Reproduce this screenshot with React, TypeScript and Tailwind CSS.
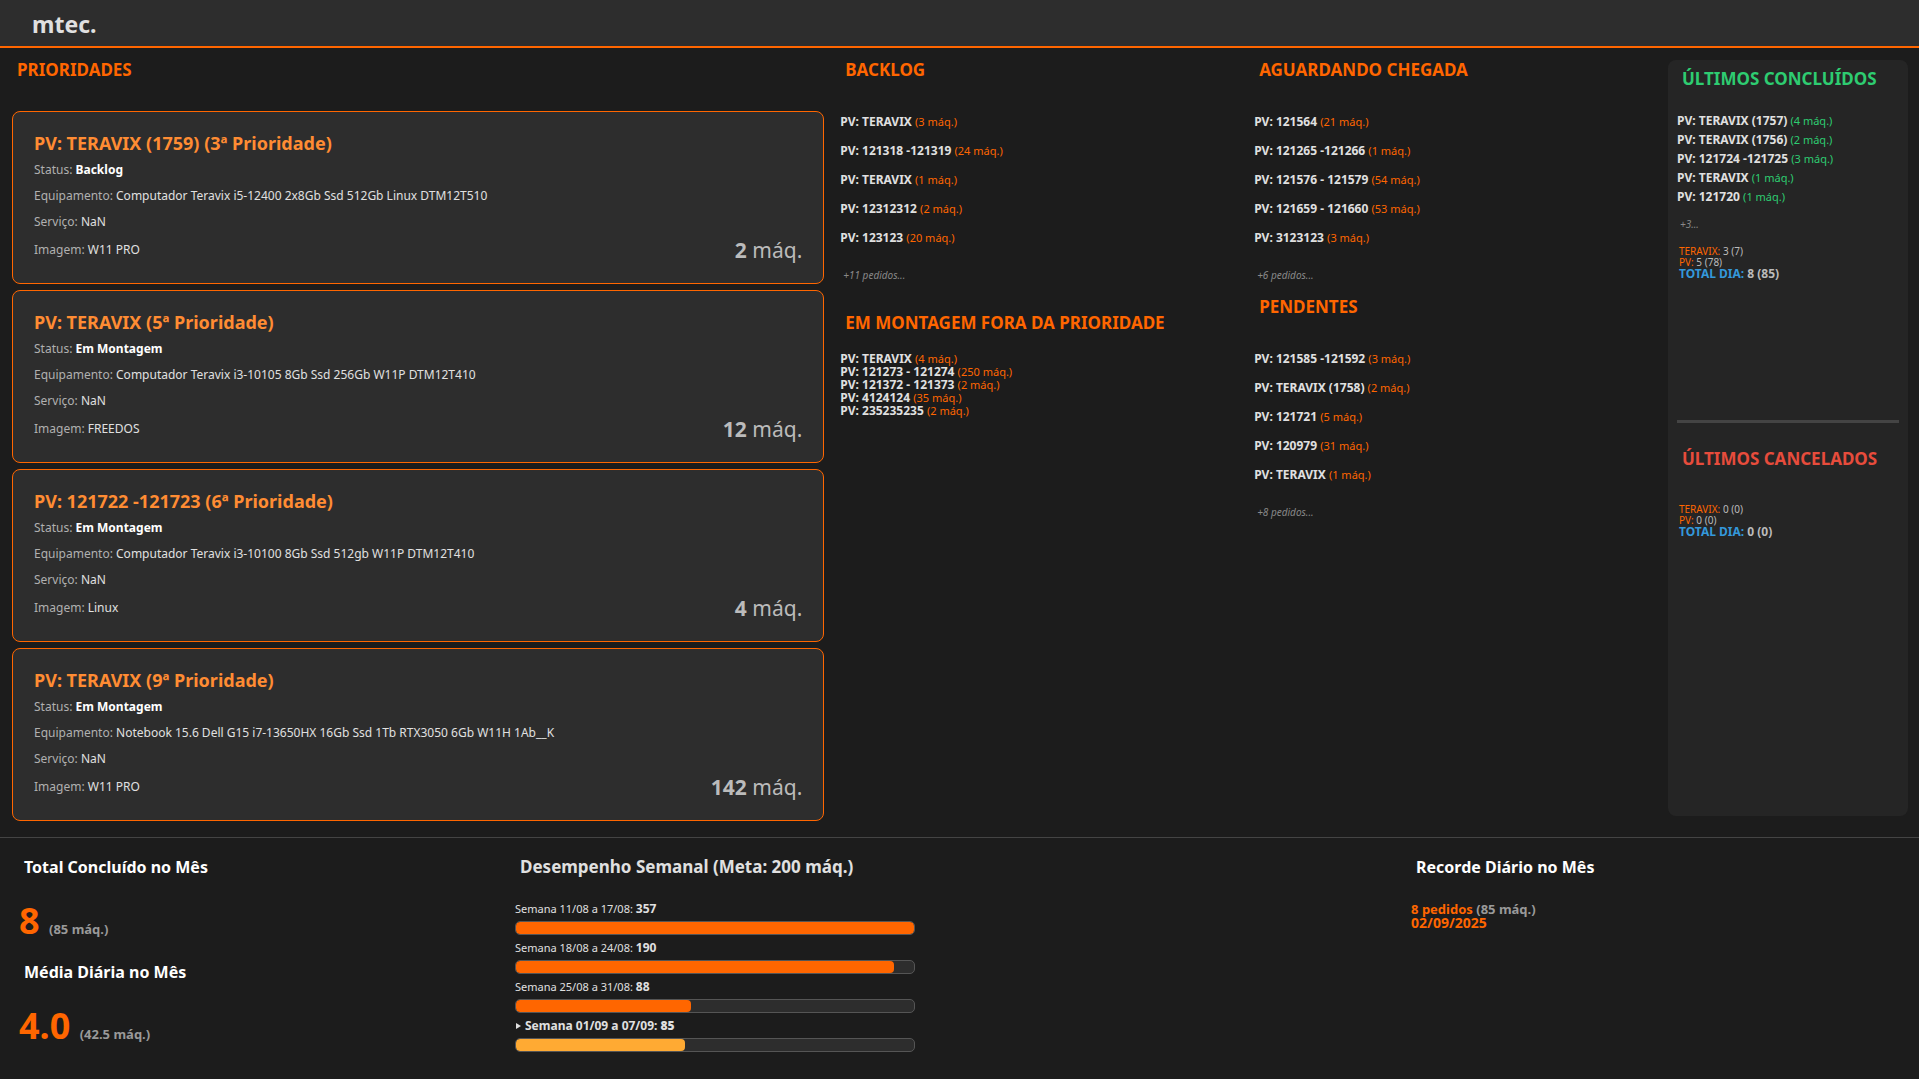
import type { ReactNode } from "react";
import clsx from "clsx";

type Order = { name: string; qty: number };

const priorities = [
  { title: "PV: TERAVIX (1759) (3ª Prioridade)", status: "Backlog", equipment: "Computador Teravix i5-12400 2x8Gb Ssd 512Gb Linux DTM12T510", image: "W11 PRO", qty: 2 },
  { title: "PV: TERAVIX (5ª Prioridade)", status: "Em Montagem", equipment: "Computador Teravix i3-10105 8Gb Ssd 256Gb W11P DTM12T410", image: "FREEDOS", qty: 12 },
  { title: "PV: 121722 -121723 (6ª Prioridade)", status: "Em Montagem", equipment: "Computador Teravix i3-10100 8Gb Ssd 512gb W11P DTM12T410", image: "Linux", qty: 4 },
  { title: "PV: TERAVIX (9ª Prioridade)", status: "Em Montagem", equipment: "Notebook 15.6 Dell G15 i7-13650HX 16Gb Ssd 1Tb RTX3050 6Gb W11H 1Ab__K", image: "W11 PRO", qty: 142 },
];

const backlog: Order[] = [
  { name: "TERAVIX", qty: 3 },
  { name: "121318 -121319", qty: 24 },
  { name: "TERAVIX", qty: 1 },
  { name: "12312312", qty: 2 },
  { name: "123123", qty: 20 },
];

const assembling: Order[] = [
  { name: "TERAVIX", qty: 4 },
  { name: "121273 - 121274", qty: 250 },
  { name: "121372 - 121373", qty: 2 },
  { name: "4124124", qty: 35 },
  { name: "235235235", qty: 2 },
];

const awaiting: Order[] = [
  { name: "121564", qty: 21 },
  { name: "121265 -121266", qty: 1 },
  { name: "121576 - 121579", qty: 54 },
  { name: "121659 - 121660", qty: 53 },
  { name: "3123123", qty: 3 },
];

const pending: Order[] = [
  { name: "121585 -121592", qty: 3 },
  { name: "TERAVIX (1758)", qty: 2 },
  { name: "121721", qty: 5 },
  { name: "120979", qty: 31 },
  { name: "TERAVIX", qty: 1 },
];

const finished: Order[] = [
  { name: "TERAVIX (1757)", qty: 4 },
  { name: "TERAVIX (1756)", qty: 2 },
  { name: "121724 -121725", qty: 3 },
  { name: "TERAVIX", qty: 1 },
  { name: "121720", qty: 1 },
];

const weeks = [
  { label: "Semana 11/08 a 17/08:", total: 357 },
  { label: "Semana 18/08 a 24/08:", total: 190 },
  { label: "Semana 25/08 a 31/08:", total: 88 },
  { label: "Semana 01/09 a 07/09:", total: 85, current: true },
];

const WEEKLY_GOAL = 200;

function Heading({ children, className = "text-[17px] text-[#ff6600]" }: { children: ReactNode; className?: string }) {
  return <h2 className={clsx("pl-[5px] leading-[26px] font-bold", className)}>{children}</h2>;
}

function OrderList({ items, row, accent = "text-[#ff6600]" }: { items: Order[]; row: string; accent?: string }) {
  return (
    <ul className={clsx("text-[12px] font-bold text-[#e0e0e0]", row)}>
      {items.map((o, i) => (
        <li key={i}>
          PV: {o.name} <span className={clsx("text-[11px] font-normal", accent)}>({o.qty} máq.)</span>
        </li>
      ))}
    </ul>
  );
}

function More({ children }: { children: ReactNode }) {
  return <p className="pl-[3px] text-[10px] leading-4 text-[#888888] italic">{children}</p>;
}

function Field({ label, children, strong }: { label: string; children: ReactNode; strong?: boolean }) {
  return (
    <p className="text-[12px] leading-[26px] text-[#b0b0b0]">
      {label}: <span className={strong ? "font-bold text-white" : "text-[#e0e0e0]"}>{children}</span>
    </p>
  );
}

function DayTotals({ teravix, pv, total }: { teravix: string; pv: string; total: string }) {
  return (
    <div className="pl-0.5 text-[10px] leading-[11px] text-[#bbbbbb]">
      <p><span className="text-[#ff6600]">TERAVIX:</span> {teravix}</p>
      <p><span className="text-[#ff6600]">PV:</span> {pv}</p>
      <p className="text-[12px] font-bold"><span className="text-[#3498db]">TOTAL DIA:</span> {total}</p>
    </div>
  );
}

function Metric({ title, value, detail }: { title: string; value: string; detail: string }) {
  return (
    <section>
      <Heading className="text-[16px] text-white">{title}</Heading>
      <p className="mt-[21px] text-[36px] leading-10 font-bold text-[#ff6600]">
        {value} <span className="text-[13px] leading-none text-[#999999]">{detail}</span>
      </p>
    </section>
  );
}

export default function App() {
  return (
    <div className="flex min-h-screen flex-col bg-[#1c1c1c] font-['Noto_Sans',sans-serif] text-[#e0e0e0]">
      <header className="border-b-2 border-[#ff6600] bg-[#2d2d2d] px-8 pt-2 pb-1.5">
        <h1 className="text-[23px] leading-8 font-bold">mtec.</h1>
      </header>

      <main className="grid grow grid-cols-[49fr_24fr_24fr_240px] gap-4 pt-[9px] pr-[11px] pb-[15px] pl-3">
        <section>
          <Heading>PRIORIDADES</Heading>
          <div className="mt-7 flex flex-col gap-1.5">
            {priorities.map((p) => (
              <article key={p.title} className="rounded-lg border border-[#ff6600] bg-[#2d2d2d] px-[21px] pt-[19px] pb-5">
                <h3 className="mb-0.5 text-[18px] leading-6 font-bold text-[#ff8c33]">{p.title}</h3>
                <Field label="Status" strong>{p.status}</Field>
                <Field label="Equipamento">{p.equipment}</Field>
                <Field label="Serviço">NaN</Field>
                <div className="mt-0.5 flex justify-between">
                  <Field label="Imagem">{p.image}</Field>
                  <p className="text-[21px] leading-[26px] text-[#bbbbbb]"><b>{p.qty}</b> máq.</p>
                </div>
              </article>
            ))}
          </div>
        </section>

        <div>
          <section>
            <Heading>BACKLOG</Heading>
            <div className="mt-6 mb-[15px]"><OrderList items={backlog} row="leading-[29px]" /></div>
            <More>+11 pedidos...</More>
          </section>
          <section className="mt-[27px]">
            <Heading>EM MONTAGEM FORA DA PRIORIDADE</Heading>
            <div className="mt-4"><OrderList items={assembling} row="leading-[13px]" /></div>
          </section>
        </div>

        <div className="flex flex-col gap-[11px]">
          <section>
            <Heading>AGUARDANDO CHEGADA</Heading>
            <div className="mt-6 mb-[15px]"><OrderList items={awaiting} row="leading-[29px]" /></div>
            <More>+6 pedidos...</More>
          </section>
          <section>
            <Heading>PENDENTES</Heading>
            <div className="mt-6 mb-[15px]"><OrderList items={pending} row="leading-[29px]" /></div>
            <More>+8 pedidos...</More>
          </section>
        </div>

        <aside className="mt-[3px] mb-1.5 rounded-lg bg-[#252525] px-[9px] pt-1.5">
          <section className="min-h-[354px]">
            <Heading className="text-[17px] text-[#2ecc71]">ÚLTIMOS CONCLUÍDOS</Heading>
            <div className="mt-[19px] mb-2.5">
              <OrderList items={finished} row="leading-[19px]" accent="text-[#2ecc71]" />
            </div>
            <More>+3...</More>
            <div className="mt-3.5"><DayTotals teravix="3 (7)" pv="5 (78)" total="8 (85)" /></div>
          </section>
          <hr className="border-t-3 border-[#444444]" />
          <section className="mt-[23px]">
            <Heading className="text-[17px] text-[#e74c3c]">ÚLTIMOS CANCELADOS</Heading>
            <div className="mt-8"><DayTotals teravix="0 (0)" pv="0 (0)" total="0 (0)" /></div>
          </section>
        </aside>
      </main>

      <footer className="grid min-h-[242px] grid-cols-[480px_9fr_5fr] gap-4 border-t border-[#444444] px-[19px] pt-4">
        <div className="flex flex-col gap-[18px]">
          <Metric title="Total Concluído no Mês" value="8" detail="(85 máq.)" />
          <Metric title="Média Diária no Mês" value="4.0" detail="(42.5 máq.)" />
        </div>

        <section>
          <Heading className="text-[17px] text-[#e0e0e0]">Desempenho Semanal (Meta: 200 máq.)</Heading>
          <ul className="mt-[21px] flex max-w-[400px] flex-col gap-[5px]">
            {weeks.map((w) => (
              <li key={w.label}>
                <p className="mb-1 flex items-center text-[11px] leading-4">
                  {w.current && (
                    <svg viewBox="0 0 5 6" className="mr-1 ml-px h-1.5 w-[5px] fill-current" aria-hidden="true">
                      <path d="M0 0 5 3 0 6Z" />
                    </svg>
                  )}
                  <span className={clsx(w.current && "text-[12px] font-bold")}>
                    {w.label} <b className="text-[12px]">{w.total}</b>
                  </span>
                </p>
                <div className="h-3.5 overflow-hidden rounded-[5px] border border-[#555555] bg-[#2d2d2d]">
                  <div
                    className={clsx("h-full rounded-[4px]", w.current ? "bg-[#ffaa33]" : "bg-[#ff6600]")}
                    style={{ width: `${Math.min(100, (w.total / WEEKLY_GOAL) * 100)}%` }}
                  />
                </div>
              </li>
            ))}
          </ul>
        </section>

        <section>
          <Heading className="text-[16px] text-white">Recorde Diário no Mês</Heading>
          <div className="mt-[22px] text-[13px] leading-3.5 font-bold text-[#ff6600]">
            <p>8 pedidos <span className="text-[#999999]">(85 máq.)</span></p>
            <p className="text-[14px]">02/09/2025</p>
          </div>
        </section>
      </footer>
    </div>
  );
}
